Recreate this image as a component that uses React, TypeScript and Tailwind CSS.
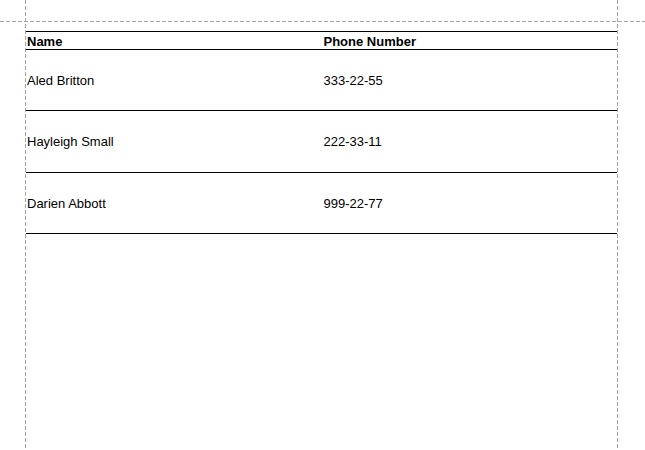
import React from 'react'

const contacts = [
  { name: 'Aled Britton', phone: '333-22-55', h: 'h-[61px]' },
  { name: 'Hayleigh Small', phone: '222-33-11', h: 'h-[62px]' },
  { name: 'Darien Abbott', phone: '999-22-77', h: 'h-[61px]' },
]

// Margin guides drawn over the report page
function Guides() {
  return (
    <svg className="pointer-events-none absolute inset-0" width={645} height={450}>
      <line x1={0} y1={21.5} x2={645} y2={21.5} stroke="#a6a6a6" strokeDasharray="4 2" />
      <line x1={25.5} y1={0} x2={25.5} y2={450} stroke="#a6a6a6" strokeDasharray="4 2" />
      <line x1={617.5} y1={0} x2={617.5} y2={450} stroke="#a6a6a6" strokeDasharray="4 2" />
    </svg>
  )
}

export default function App() {
  return (
    <div
      className="relative h-[450px] w-[645px] overflow-hidden bg-white text-[13px] text-black"
      style={{ fontFamily: '"Liberation Sans", Arial, sans-serif' }}
    >
      <div className="pl-[26px] pt-[31px]">
        <div className="w-[591px] border-t border-black">
          <div className="grid h-[18px] grid-cols-2 items-center border-b border-black font-bold">
            <div className="pl-px">Name</div>
            <div className="pl-[2px]">Phone Number</div>
          </div>
          {contacts.map((c) => (
            <div key={c.name} className={`grid grid-cols-2 items-center border-b border-black ${c.h}`}>
              <div className="pl-px pt-px">{c.name}</div>
              <div className="pl-[2px] pt-px">{c.phone}</div>
            </div>
          ))}
        </div>
      </div>
      <Guides />
    </div>
  )
}
